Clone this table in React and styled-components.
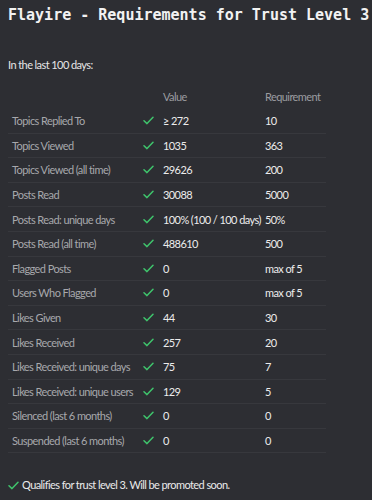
import styled, { createGlobalStyle } from "styled-components";

const GlobalStyle = createGlobalStyle`
  html, body {
    margin: 0;
    background: #2d2e33;
  }
  body {
    font-family: "Lato", "Noto Sans", sans-serif;
    letter-spacing: -0.58px;
  }
`;

const Page = styled.div`
  box-sizing: border-box;
  height: 500px;
  padding: 5px 8px 0;
  color: #dcdcdc;
  overflow: hidden;
`;

const Title = styled.h1`
  margin: 0;
  font-family: "DejaVu Sans Mono", monospace;
  font-size: 15px;
  font-weight: bold;
  line-height: 20px;
  letter-spacing: 0;
  color: #f2f2f2;
  white-space: nowrap;
`;

const Intro = styled.p`
  margin: 32px 0 0;
  font-size: 11px;
  line-height: 16px;
  color: #e6e6e6;
`;

const Table = styled.table`
  margin-top: 11px;
  width: 318px;
  table-layout: fixed;
  border-collapse: collapse;
  font-size: 11px;
`;

const Col = styled.col`
  width: ${(p) => (p.$w ? `${p.$w}px` : "auto")};
`;

const Head = styled.th`
  height: 25px;
  padding: 0 0 0 4px;
  text-align: left;
  font-weight: normal;
  color: #9b9ca0;
`;

const Row = styled.tr`
  border-bottom: 1px solid #37383d;
`;

const Cell = styled.td`
  height: 23.6px;
  padding: 0 0 0 4px;
  white-space: nowrap;
  color: ${(p) => (p.$muted ? "#a7a8ac" : "#ececec")};
`;

const Check = styled.svg`
  display: block;
  width: 11px;
  height: 9px;
`;

const Footer = styled.p`
  margin: 24px 0 0;
  display: flex;
  align-items: center;
  gap: 3px;
  font-size: 11px;
  line-height: 16px;
  color: #eaeaea;
`;

const Tick = () => (
  <Check viewBox="0 0 11 9">
    <path
      d="M1 4.8 L4 7.6 L10 1.2"
      fill="none"
      stroke="#3fc46c"
      strokeWidth="1.5"
      strokeLinecap="round"
      strokeLinejoin="round"
    />
  </Check>
);

const rows = [
  ["Topics Replied To", "≥ 272", "10"],
  ["Topics Viewed", "1035", "363"],
  ["Topics Viewed (all time)", "29626", "200"],
  ["Posts Read", "30088", "5000"],
  ["Posts Read: unique days", "100% (100 / 100 days)", "50%"],
  ["Posts Read (all time)", "488610", "500"],
  ["Flagged Posts", "0", "max of 5"],
  ["Users Who Flagged", "0", "max of 5"],
  ["Likes Given", "44", "30"],
  ["Likes Received", "257", "20"],
  ["Likes Received: unique days", "75", "7"],
  ["Likes Received: unique users", "129", "5"],
  ["Silenced (last 6 months)", "0", "0"],
  ["Suspended (last 6 months)", "0", "0"],
];

export default function App() {
  return (
    <>
      <GlobalStyle />
      <Page>
        <Title>Flayire - Requirements for Trust Level 3</Title>
        <Intro>In the last 100 days:</Intro>
        <Table>
          <colgroup>
            <Col $w={131} />
            <Col $w={20} />
            <Col $w={102} />
            <Col />
          </colgroup>
          <thead>
            <tr>
              <Head></Head>
              <Head></Head>
              <Head>Value</Head>
              <Head>Requirement</Head>
            </tr>
          </thead>
          <tbody>
            {rows.map(([label, value, req]) => (
              <Row key={label}>
                <Cell $muted>{label}</Cell>
                <Cell>
                  <Tick />
                </Cell>
                <Cell>{value}</Cell>
                <Cell>{req}</Cell>
              </Row>
            ))}
          </tbody>
        </Table>
        <Footer>
          <Tick />
          Qualifies for trust level 3. Will be promoted soon.
        </Footer>
      </Page>
    </>
  );
}
